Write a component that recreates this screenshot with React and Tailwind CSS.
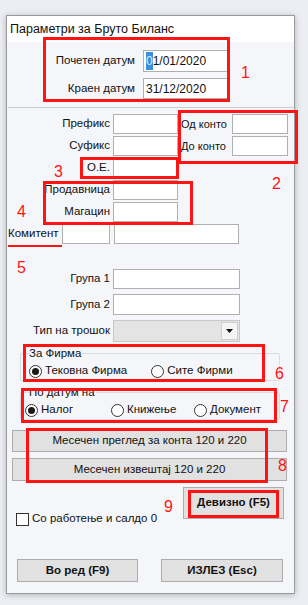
import { useState } from 'react'

const FONT = { fontFamily: '"Liberation Sans", Arial, sans-serif' }

function Box({ className = '', children }) {
  return (
    <div className={`bg-white border border-[#b0b0b0] flex items-center pl-[2px] text-[12px] ${className}`}>
      {children}
    </div>
  )
}

function Radio({ checked, label, className = '' }) {
  return (
    <div className={`flex items-center h-[14px] ${className}`}>
      <span className="w-[13px] h-[13px] rounded-full border border-[#333] bg-white flex items-center justify-center">
        {checked && <span className="w-[7px] h-[7px] rounded-full bg-[#1a1a1a]" />}
      </span>
      <span className="ml-[3px] text-[11.5px] leading-none">{label}</span>
    </div>
  )
}

function WinButton({ className = '', children }) {
  return (
    <div className={`bg-[#e1e1e1] border border-[#adadad] flex items-center justify-center text-[11.5px] ${className}`}>
      {children}
    </div>
  )
}

export default function App() {
  const [checked, setChecked] = useState(false)

  return (
    <div className="relative w-[308px] h-[605px] bg-[#eceef3] pt-[15px] pl-[6px] text-[#111]" style={FONT}>
      {/* прозорец */}
      <div className="w-[289px] h-[579px] border border-[#9a9a9a] bg-[#f5f6fa] shadow-[0_1px_6px_rgba(0,0,0,0.25)] flex flex-col">
        <div className="h-[26px] bg-white flex items-center pl-[3px] text-[12.5px]">Параметри за Бруто Биланс</div>

        {/* датуми */}
        <div className="pt-[8px] text-[11.5px]">
          <div className="flex items-center">
            <div className="w-[128px] text-right">Почетен датум</div>
            <Box className="ml-[8px] w-[85px] h-[22px]">
              <span className="bg-[#3c8ee0] text-[#dfefff]">0</span>1/01/2020
            </Box>
          </div>
          <div className="flex items-center mt-[6px]">
            <div className="w-[128px] text-right">Краен датум</div>
            <Box className="ml-[8px] w-[85px] h-[21px]">31/12/2020</Box>
          </div>
        </div>
        <div className="mt-[8px] ml-[1px] border-t border-[#c9cbd0]" />

        {/* филтри */}
        <div className="pt-[6px] text-[11.5px]">
          <div className="flex items-center h-[20px]">
            <div className="w-[103px] text-right">Префикс</div>
            <Box className="ml-[3px] w-[65px] h-[20px]" />
            <div className="ml-[3px] w-[49px] whitespace-nowrap text-[11px]">Од конто</div>
            <Box className="ml-[2px] w-[56px] h-[20px]" />
          </div>
          <div className="flex items-center h-[20px] mt-[2px]">
            <div className="w-[103px] text-right">Суфикс</div>
            <Box className="ml-[3px] w-[65px] h-[20px]" />
            <div className="ml-[3px] w-[49px] whitespace-nowrap text-[11px]">До конто</div>
            <Box className="ml-[2px] w-[56px] h-[20px]" />
          </div>
          <div className="flex items-center h-[20px] mt-[2px]">
            <div className="w-[103px] text-right">О.Е.</div>
            <Box className="ml-[3px] w-[65px] h-[20px]" />
          </div>
          <div className="flex items-center h-[20px] mt-[2px]">
            <div className="w-[103px] text-right">Продавница</div>
            <Box className="ml-[3px] w-[65px] h-[20px]" />
          </div>
          <div className="flex items-center h-[20px] mt-[2px]">
            <div className="w-[103px] text-right">Магацин</div>
            <Box className="ml-[3px] w-[65px] h-[20px]" />
          </div>
          <div className="flex items-center h-[20px] mt-[2px]">
            <div className="ml-[1px] w-[54px]">Комитент</div>
            <Box className="w-[48px] h-[20px]" />
            <Box className="ml-[4px] w-[125px] h-[20px]" />
          </div>

          <div className="flex items-center mt-[25px]">
            <div className="w-[103px] text-right">Група 1</div>
            <Box className="ml-[3px] w-[127px] h-[20px]" />
          </div>
          <div className="flex items-center mt-[5px]">
            <div className="w-[103px] text-right">Група 2</div>
            <Box className="ml-[3px] w-[127px] h-[21px]" />
          </div>
          <div className="flex items-center mt-[5px]">
            <div className="w-[103px] text-right">Тип на трошок</div>
            <div className="ml-[3px] w-[127px] h-[22px] bg-[#e4e4e4] border border-[#c8c8c8] flex justify-end p-[1px]">
              <div className="w-[17px] h-full bg-[#f4f4f4] border border-[#cfcfcf] flex items-center justify-center">
                <svg width="7" height="4" viewBox="0 0 7 4"><path d="M0 0h7L3.5 4z" fill="#111" /></svg>
              </div>
            </div>
          </div>
        </div>

        {/* За Фирма */}
        <div className="relative mt-[11px] ml-[13px] w-[260px] h-[28px] border border-[#dadce2] rounded-[2px] text-[11.5px]">
          <span className="absolute -top-[8px] left-[8px] bg-[#f5f6fa] pr-[1px] leading-[14px]">За Фирма</span>
          <div className="flex pt-[10px] pl-[8px]">
            <Radio checked label="Тековна Фирма" />
            <Radio label="Сите Фирми" className="ml-[24px]" />
          </div>
        </div>

        {/* По датум на */}
        <div className="relative mt-[11px] ml-[13px] w-[260px] h-[28px] border border-[#dadce2] rounded-[2px] text-[11.5px]">
          <span className="absolute -top-[8px] left-[8px] bg-[#f5f6fa] pr-[1px] leading-[14px]">По датум на</span>
          <div className="flex pt-[10px] pl-[4px]">
            <Radio checked label="Налог" className="w-[86px]" />
            <Radio label="Книжење" className="w-[83px]" />
            <Radio label="Документ" />
          </div>
        </div>

        <WinButton className="mt-[10px] ml-[5px] w-[275px] h-[22px]">Месечен преглед за конта 120 и 220</WinButton>
        <WinButton className="mt-[6px] ml-[5px] w-[275px] h-[23px]">Месечен извештај 120 и 220</WinButton>

        <div className="flex items-start mt-[6px]">
          <label className="flex items-center h-[14px] mt-[25px] ml-[9px] text-[11.5px] cursor-pointer" onClick={() => setChecked((c) => !c)}>
            <span className="w-[13px] h-[13px] bg-white border border-[#333] flex items-center justify-center text-[10px] leading-none">
              {checked ? '✓' : ''}
            </span>
            <span className="ml-[3px] leading-none">Со работење и салдо 0</span>
          </label>
          <WinButton className="ml-auto mr-[10px] w-[101px] h-[32px] font-bold">Девизно (F5)</WinButton>
        </div>

        <div className="flex mt-[33px] ml-[10px]">
          <WinButton className="w-[121px] h-[23px] font-bold">Во ред (F9)</WinButton>
          <WinButton className="ml-[23px] w-[122px] h-[23px] font-bold">ИЗЛЕЗ (Esc)</WinButton>
        </div>
      </div>

      {/* ознаки */}
      <div className="absolute left-[43px] top-[37px] w-[187px] h-[65px] border-[3px] border-[#ff1414]" />
      <div className="absolute left-[178px] top-[110px] w-[120px] h-[54px] border-[3px] border-[#ff1414]" />
      <div className="absolute left-[80px] top-[157px] w-[99px] h-[22px] border-[3px] border-[#ff1414]" />
      <div className="absolute left-[43px] top-[181px] w-[150px] h-[44px] border-[3px] border-[#ff1414]" />
      <div className="absolute left-[8px] top-[245px] w-[54px] h-[2px] bg-[#ff1414]" />
      <div className="absolute left-[23px] top-[344px] w-[242px] h-[38px] border-[3px] border-[#ff1414]" />
      <div className="absolute left-[21px] top-[388px] w-[256px] h-[35px] border-[3px] border-[#ff1414]" />
      <div className="absolute left-[26px] top-[428px] w-[242px] h-[55px] border-[3px] border-[#ff1414]" />
      <div className="absolute left-[188px] top-[490px] w-[91px] h-[28px] border-[3px] border-[#ff1414]" />

      <div className="absolute left-[241px] top-[65px] text-[16px] leading-none text-[#ff1414]">1</div>
      <div className="absolute left-[272px] top-[176px] text-[16px] leading-none text-[#ff1414]">2</div>
      <div className="absolute left-[54px] top-[164px] text-[16px] leading-none text-[#ff1414]">3</div>
      <div className="absolute left-[17px] top-[204px] text-[16px] leading-none text-[#ff1414]">4</div>
      <div className="absolute left-[17px] top-[260px] text-[16px] leading-none text-[#ff1414]">5</div>
      <div className="absolute left-[275px] top-[366px] text-[16px] leading-none text-[#ff1414]">6</div>
      <div className="absolute left-[280px] top-[399px] text-[16px] leading-none text-[#ff1414]">7</div>
      <div className="absolute left-[278px] top-[458px] text-[16px] leading-none text-[#ff1414]">8</div>
      <div className="absolute left-[164px] top-[499px] text-[16px] leading-none text-[#ff1414]">9</div>
    </div>
  )
}
